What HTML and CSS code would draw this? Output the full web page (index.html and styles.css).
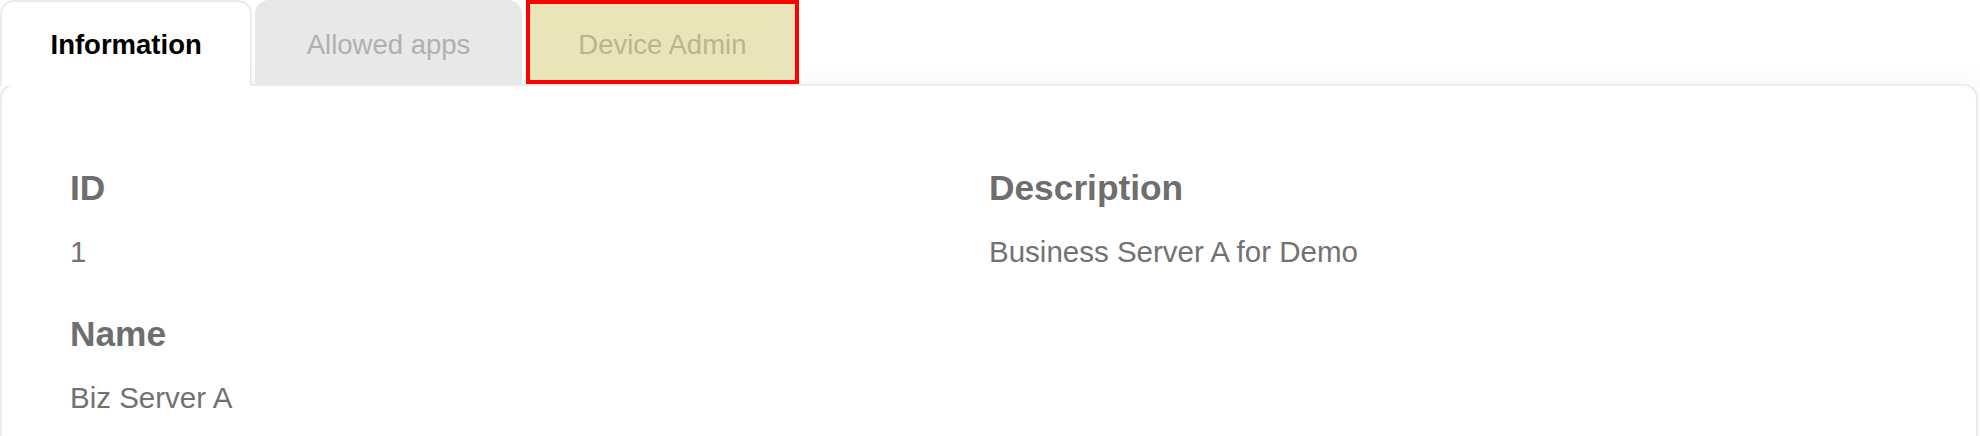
FILE: index.html
```html
<!DOCTYPE html>
<html lang="en">
<head>
  <meta charset="UTF-8" />
  <meta name="viewport" content="width=device-width, initial-scale=1" />
  <title>Server details</title>
  <link rel="stylesheet" href="styles.css">
</head>
<body>

  <div class="page">
    <div class="tabs">
      <div class="tab active">Information</div>
      <div class="tab">Allowed apps</div>
      <div class="tab marked">Device Admin</div>
    </div>

    <div class="panel">
      <div class="fields">
        <div class="field">
          <div class="label">ID</div>
          <div class="value">1</div>
        </div>
        <div class="field">
          <div class="label">Description</div>
          <div class="value">Business Server A for Demo</div>
        </div>
        <div class="field">
          <div class="label">Name</div>
          <div class="value">Biz Server A</div>
        </div>
      </div>
    </div>
  </div>

</body>
</html>
```

FILE: styles.css
```css
* {
  box-sizing: border-box;
  margin: 0;
  padding: 0;
}

html, body {
  height: 100%;
  font-family: "Liberation Sans", Arial, sans-serif;
  background: white;
  overflow: hidden;
}

.page {
  padding-right: 2px;
}

/* Tabs */
.tabs {
  display: flex;
  align-items: flex-start;
  gap: 4px;
  position: relative;
  z-index: 1;
}

.tab {
  height: 84px;
  padding: 29px 51.5px 23px;
  font-size: 27.5px;
  line-height: 32px;
  color: #b0b0b0;
  background: #e8e8e8;
  border-radius: 14px 14px 0 0;
  white-space: nowrap;
}

.tab.active {
  height: 86px;
  margin-bottom: -2px;
  margin-right: -1px;
  padding: 27px 48.5px 25px;
  color: #000;
  font-weight: bold;
  background: white;
  border: 2px solid #ebebeb;
  border-bottom: none;
}

.tab.marked {
  padding: 25px 48.5px 19px;
  color: #bdb48c;
  background: #ebe4b9;
  border: 4px solid #ff0000;
  border-radius: 0;
}

/* Panel */
.panel {
  border: 2px solid #ececec;
  border-radius: 14px;
  box-shadow: 0 0 28px rgba(0, 0, 0, 0.05);
  padding: 82px 68px 60px;
  min-height: 420px;
}

.fields {
  display: grid;
  grid-template-columns: 1fr 1fr;
  row-gap: 45px;
}

.label {
  font-size: 35.3px;
  line-height: 40px;
  font-weight: bold;
  color: #6e6e6e;
  margin-bottom: 27px;
}

.value {
  font-size: 29.5px;
  line-height: 34px;
  color: #727272;
}
```
